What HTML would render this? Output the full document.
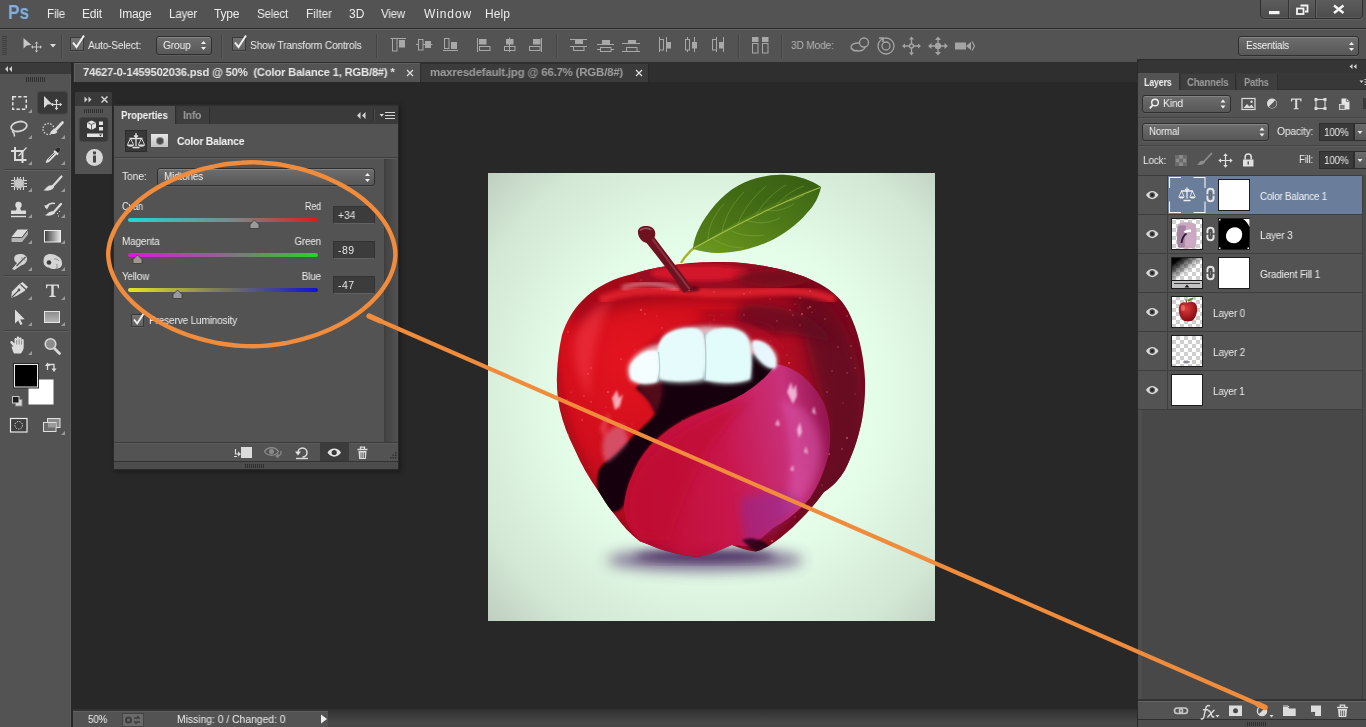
<!DOCTYPE html>
<html>
<head>
<meta charset="utf-8">
<title>Photoshop</title>
<style>
*{box-sizing:border-box;margin:0;padding:0}
html,body{width:1366px;height:727px;overflow:hidden;background:#282828}
body{font-family:"Liberation Sans",sans-serif;font-size:11px;color:#e6e6e6;position:relative}
.abs{position:absolute}
.t{position:absolute;white-space:nowrap;line-height:1;will-change:transform}
#menubar{left:0;top:0;width:1366px;height:29px;background:#535353;border-bottom:1px solid #2c2c2c}
#menubar .t{top:8px;font-size:12px;color:#ececec}
#optbar{left:0;top:28px;width:1366px;height:35px;background:#535353;border-top:1px solid #2c2c2c;border-bottom:1px solid #2d2d2d;box-shadow:inset 0 1px 0 #626262}
#tabstrip{left:73px;top:63px;width:1064px;height:19px;background:#2f2f2f}
#toolbar{left:0;top:63px;width:71px;height:664px;background:#535353;box-shadow:inset -1px 0 0 #5c5c5c}
#statusbar{left:73px;top:709px;width:1064px;height:18px;background:linear-gradient(#303030,#464646 70%,#484848)}

.cb{position:absolute;width:14px;height:14px;border:1px solid #3a3a3a;background:linear-gradient(#727272,#626262);box-shadow:0 1px 0 #5e5e5e}
.dd{position:absolute;border:1px solid #2f2f2f;border-radius:3px;background:linear-gradient(#6e6e6e,#575757);box-shadow:inset 0 1px 0 #858585,0 1px 0 #5e5e5e}
.sep{position:absolute;width:2px;background:#444;border-right:1px solid #5c5c5c}
</style>
</head>
<body>
<!-- MENUBAR -->
<div id="menubar" class="abs">
  <div class="t" style="left:7.500px;top:2px;font-size:20.500px;font-weight:bold;color:#86aed8;transform:scaleX(0.84);transform-origin:left center;text-shadow:0 0 1px #3a6a9a">Ps</div>
  <div class="t" style="left:47px;letter-spacing:-0.200px;transform:scaleX(0.9707);transform-origin:left center">File</div>
  <div class="t" style="left:82px;letter-spacing:-0.200px;transform:scaleX(1.0057);transform-origin:left center">Edit</div>
  <div class="t" style="left:119px;letter-spacing:-0.200px;transform:scaleX(0.9889);transform-origin:left center">Image</div>
  <div class="t" style="left:169px;letter-spacing:-0.200px;transform:scaleX(0.9645);transform-origin:left center">Layer</div>
  <div class="t" style="left:214px;letter-spacing:-0.200px;transform:scaleX(0.9914);transform-origin:left center">Type</div>
  <div class="t" style="left:257px;letter-spacing:-0.200px;transform:scaleX(0.9639);transform-origin:left center">Select</div>
  <div class="t" style="left:306px;letter-spacing:0.000px;transform:scaleX(0.9748);transform-origin:left center">Filter</div>
  <div class="t" style="left:349px;letter-spacing:0.000px;transform:scaleX(0.9776);transform-origin:left center">3D</div>
  <div class="t" style="left:381px;letter-spacing:-0.200px;transform:scaleX(0.9601);transform-origin:left center">View</div>
  <div class="t" style="left:424px;letter-spacing:0.885px;transform:scaleX(1.0000);transform-origin:left center">Window</div>
  <div class="t" style="left:485px;letter-spacing:0.078px;transform:scaleX(1.0000);transform-origin:left center">Help</div>
  <!-- window controls -->
  <div class="abs" style="left:1260px;top:-1px;width:103px;height:20px;border:1px solid #2e2e2e;border-radius:0 0 4px 4px;background:linear-gradient(#5c5c5c,#4c4c4c);box-shadow:0 1px 0 #626262, inset 0 -1px 0 #5a5a5a"></div>
  <div class="abs" style="left:1288px;top:0;width:1px;height:18px;background:#333;box-shadow:1px 0 0 #626262"></div>
  <div class="abs" style="left:1315px;top:0;width:1px;height:18px;background:#333;box-shadow:1px 0 0 #626262"></div>
  <svg class="abs" style="left:1260px;top:0" width="104" height="19" viewBox="1260 0 104 19">
    <rect x="1269" y="11" width="10.500" height="3.200" fill="#f4f4f4"/>
    <path d="M1300.500 5.500h7v6h-2.500" fill="none" stroke="#f4f4f4" stroke-width="1.800"/><rect x="1297" y="8.500" width="6.500" height="5.500" fill="none" stroke="#f4f4f4" stroke-width="1.800"/>
    <path d="M1334 5.500l9.500 7.500M1343.500 5.500l-9.500 7.500" stroke="#f4f4f4" stroke-width="2.400"/>
  </svg>
</div>
<!-- OPTIONS BAR -->
<div id="optbar" class="abs">
  <!-- grip -->
  <div class="abs" style="left:2px;top:7px;width:5px;height:20px;background:repeating-linear-gradient(#3e3e3e 0 1px,transparent 1px 2px)"></div>
  <!-- move tool icon -->
  <svg class="abs" style="left:20px;top:6px" width="40" height="22" viewBox="0 0 40 22">
    <path d="M3.500 3L3.500 13.500L6.800 10.500L11.500 10Z" fill="#c8c8c8"/>
    <path d="M16.500 8.500v7M13 12h7" stroke="#c8c8c8" stroke-width="1" fill="none"/>
    <path d="M16.500 6.500l-1.800 2h3.600zM16.500 17.500l-1.800-2h3.600zM11 12l2-1.800v3.600zM22 12l-2-1.800v3.600z" fill="#c8c8c8"/>
    <path d="M30 9h6l-3 3.500z" fill="#dcdcdc"/>
  </svg>
  <div class="sep" style="left:61px;top:5px;height:24px"></div>
  <div class="cb" style="left:70px;top:8px"></div>
  <svg class="abs" style="left:70px;top:4px" width="18" height="18" viewBox="0 0 18 18"><path d="M3 9.500l3.500 4.500L14 2.500" stroke="#f0f0f0" stroke-width="2" fill="none"/></svg>
  <div class="t" style="left:88px;top:11px;font-size:11px;color:#ececec;letter-spacing:-0.200px;transform:scaleX(0.9214);transform-origin:left center">Auto-Select:</div>
  <div class="dd" style="left:156px;top:7px;width:56px;height:19px"></div>
  <div class="t" style="left:163px;top:11px;font-size:11px;color:#f0f0f0;letter-spacing:-0.200px;transform:scaleX(0.9331);transform-origin:left center">Group</div>
  <svg class="abs" style="left:199px;top:10px" width="9" height="13" viewBox="0 0 9 13"><path d="M2 5l2.500-3 2.500 3zM2 8l2.500 3 2.500-3z" fill="#f0f0f0"/></svg>
  <div class="sep" style="left:221px;top:5px;height:24px"></div>
  <div class="cb" style="left:232px;top:8px"></div>
  <svg class="abs" style="left:232px;top:4px" width="18" height="18" viewBox="0 0 18 18"><path d="M3 9.500l3.500 4.500L14 2.500" stroke="#f0f0f0" stroke-width="2" fill="none"/></svg>
  <div class="t" style="left:250px;top:11px;font-size:11px;color:#ececec;letter-spacing:-0.200px;transform:scaleX(0.9330);transform-origin:left center">Show Transform Controls</div>
  <div class="sep" style="left:376px;top:5px;height:24px"></div>
  <!-- align icons -->
  <svg class="abs" style="left:380px;top:1px" width="400" height="30" viewBox="380 30 400 30" fill="none" stroke="#a8a8a8" stroke-width="1">
    <!-- 1 align top -->
    <path d="M390.500 38.500h15.500"/><rect x="392.500" y="38.500" width="4.500" height="12.500"/><rect x="399.500" y="40.500" width="5" height="6.500" fill="#a8a8a8"/>
    <!-- 2 align vcenter -->
    <path d="M416 44.500h16.500"/><rect x="418.500" y="39.500" width="4.500" height="10.500" fill="#535353"/><rect x="425.500" y="41.500" width="5" height="6" fill="#a8a8a8"/>
    <!-- 3 align bottom -->
    <path d="M443 50.500h15"/><rect x="444.500" y="38.500" width="4.500" height="10"/><rect x="451.500" y="42.500" width="5" height="6" fill="#a8a8a8"/>
    <!-- 4 align left -->
    <path d="M477.500 38v14"/><rect x="479.500" y="39.500" width="6.500" height="4.500" fill="#a8a8a8"/><rect x="479.500" y="46.500" width="10.500" height="4"/>
    <!-- 5 align hcenter -->
    <path d="M509.500 37.500v14.500"/><rect x="506.500" y="39.500" width="6.500" height="4.500" fill="#a8a8a8"/><rect x="504.500" y="46.500" width="10.500" height="4" fill="#535353"/><path d="M509.500 46v5"/>
    <!-- 6 align right -->
    <path d="M541.500 38v14"/><rect x="533.500" y="39.500" width="6.500" height="4.500" fill="#a8a8a8"/><rect x="529.500" y="46.500" width="10.500" height="4"/>
    <!-- 7-9 distribute vertical -->
    <g id="dv"><path d="M570 39.500h17M570 46.500h17"/><rect x="575.500" y="40.500" width="7" height="3" fill="#a8a8a8"/><rect x="573.500" y="46.500" width="10.500" height="4"/></g>
    <g><path d="M597 44.500h17"/><rect x="602.500" y="40.500" width="7" height="3.500" fill="#a8a8a8"/><path d="M597 49.500h17"/><rect x="600.500" y="47.500" width="10.500" height="4" fill="#535353"/></g>
    <g><path d="M622 43.500h18M622 51.500h18"/><rect x="628.500" y="40.500" width="7" height="3" fill="#a8a8a8"/><rect x="626.500" y="47.500" width="10.500" height="4"/></g>
    <!-- 10-12 distribute horizontal -->
    <g><path d="M659.500 37v15M666.500 37v15"/><rect x="659.500" y="39.500" width="4" height="10.500"/><rect x="666.500" y="42.500" width="4" height="5.500" fill="#a8a8a8"/></g>
    <g><path d="M687.500 37v15M694.500 37v15"/><rect x="685.500" y="39.500" width="4" height="10.500" fill="#535353"/><rect x="692.500" y="42.500" width="4" height="5.500" fill="#a8a8a8"/></g>
    <g><path d="M716.500 37v15M723.500 37v15"/><rect x="712.500" y="39.500" width="4" height="10.500"/><rect x="719.500" y="42.500" width="4" height="5.500" fill="#a8a8a8"/></g>
    <!-- 13 auto-align -->
    <g><rect x="752.500" y="37.500" width="5.500" height="4" fill="#a8a8a8"/><rect x="762.500" y="37.500" width="5.500" height="4" fill="#a8a8a8"/>
    <rect x="752.500" y="43.500" width="5.500" height="9.500"/><rect x="762.500" y="43.500" width="5.500" height="9.500"/></g>
  </svg>
  <div class="sep" style="left:556px;top:5px;height:24px"></div>
  <div class="sep" style="left:738px;top:5px;height:24px"></div>
  <div class="sep" style="left:781px;top:5px;height:24px"></div>
  <div class="t" style="left:791px;top:11px;font-size:11px;color:#b4b4b4;letter-spacing:-0.200px;transform:scaleX(0.9262);transform-origin:left center">3D Mode:</div>
  <!-- 3D icons -->
  <svg class="abs" style="left:846px;top:3px" width="134" height="26" viewBox="846 32 134 26" fill="none" stroke="#a4a4a4" stroke-width="1.300">
    <!-- orbit -->
    <ellipse cx="858" cy="47" rx="7" ry="4"/><circle cx="864" cy="42.500" r="4.500" fill="#535353"/><path d="M854 51l-3-3M854 51l3.500-1"/>
    <!-- roll -->
    <circle cx="886" cy="46" r="8"/><circle cx="886" cy="46" r="4"/><path d="M879 38l4 0 0 4" stroke-width="1.600"/>
    <!-- pan -->
    <path d="M911.500 38v16M903.500 46h16"/><path d="M911.500 36.500l-2.500 3h5zM911.500 55.500l-2.500-3h5zM902 46l3-2.500v5zM921 46l-3-2.500v5z" fill="#a4a4a4" stroke="none"/><circle cx="911.500" cy="46" r="2" fill="#535353"/>
    <!-- slide -->
    <path d="M938 38.500v15M929 46h18"/><path d="M938 36.500l-3 3.500h6zM938 55.500l-3-3.500h6zM928 46l3.500-3v6zM948 46l-3.500-3v6z" fill="#a4a4a4" stroke="none"/><circle cx="938" cy="46" r="3.200" fill="#a4a4a4" stroke="none"/>
    <!-- camera -->
    <rect x="955" y="42.500" width="11" height="7" fill="#a4a4a4" stroke="none"/><path d="M966 46l5-4v8z" fill="#a4a4a4" stroke="none"/><path d="M972 41.500l2.500 4.500-2.500 4.500" stroke-width="1.200"/>
  </svg>
  <!-- Essentials -->
  <div class="dd" style="left:1238px;top:7px;width:121px;height:20px"></div>
  <div class="t" style="left:1246px;top:11px;font-size:11.500px;color:#f4f4f4;letter-spacing:-0.200px;transform:scaleX(0.8528);transform-origin:left center">Essentials</div>
  <svg class="abs" style="left:1347px;top:11px" width="9" height="13" viewBox="0 0 9 13"><path d="M2 5l2.500-3 2.500 3zM2 8l2.500 3 2.500-3z" fill="#f0f0f0"/></svg>
</div>
<!-- TAB STRIP -->
<div id="tabstrip" class="abs">
  <div class="abs" style="left:1px;top:0;width:346px;height:19px;background:#535353;border-left:1px solid #606060;border-top:1px solid #606060"></div>
  <div class="t" style="left:10px;top:4px;font-size:11.500px;font-weight:bold;color:#e8e8e8;letter-spacing:-0.200px;transform:scaleX(0.9752);transform-origin:left center">74627-0-1459502036.psd @ 50%&nbsp; (Color Balance 1, RGB/8#) *</div>
  <svg class="abs" style="left:333px;top:6px" width="8" height="8" viewBox="0 0 8 8"><path d="M1 1l6 6M7 1l-6 6" stroke="#dcdcdc" stroke-width="1.250"/></svg>
  <div class="abs" style="left:348px;top:1px;width:228px;height:18px;background:#3b3b3b;border-right:1px solid #2a2a2a"></div>
  <div class="t" style="left:357px;top:4px;font-size:11.500px;font-weight:bold;color:#9c9c9c;letter-spacing:-0.200px;transform:scaleX(0.9937);transform-origin:left center">maxresdefault.jpg @ 66.7% (RGB/8#)</div>
  <svg class="abs" style="left:562px;top:6px" width="8" height="8" viewBox="0 0 8 8"><path d="M1 1l6 6M7 1l-6 6" stroke="#dcdcdc" stroke-width="1.250"/></svg>
</div>
<!-- TOOLBAR -->
<div id="toolbar" class="abs">
  <div class="abs" style="left:0;top:0;width:71px;height:11px;background:#3a3a3a"></div>
  <svg class="abs" style="left:0;top:-1px" width="72" height="665" viewBox="0 62 72 665">
    <defs>
      <linearGradient id="gGrad" x1="0" x2="1"><stop offset="0" stop-color="#3a3a3a"/><stop offset="1" stop-color="#e8e8e8"/></linearGradient>
      <linearGradient id="gRect" y1="0" y2="1" x1="0" x2="0"><stop offset="0" stop-color="#8c8c8c"/><stop offset="1" stop-color="#b8b8b8"/></linearGradient>
    </defs>
    <!-- collapse arrows -->
    <path d="M8 66l-3 3 3 3zM12 66l-3 3 3 3z" fill="#cfcfcf"/>
    <!-- grip -->
    <g stroke="#2f2f2f" stroke-width="1"><path d="M26.500 77v5M28.500 77v5M30.500 77v5M32.500 77v5M34.500 77v5M36.500 77v5M38.500 77v5M40.500 77v5M42.500 77v5M44.500 77v5"/></g>
    <!-- separators -->
    <g stroke="#424242" stroke-width="1"><path d="M4 169.500h64M4 275.500h64M4 330.500h64"/></g>
    <g stroke="#606060" stroke-width="1"><path d="M4 170.500h64M4 276.500h64M4 331.500h64"/></g>
    <!-- flyout triangles -->
    <g fill="#9a9a9a">
      <path d="M32 109v4h-4z"/><path d="M32 135v4h-4zM65 135v4h-4z"/><path d="M32 161v4h-4zM65 161v4h-4z"/>
      <path d="M32 188v4h-4zM65 188v4h-4z"/><path d="M32 214v4h-4zM65 214v4h-4z"/><path d="M32 240v4h-4zM65 240v4h-4z"/><path d="M32 267v4h-4zM65 267v4h-4z"/>
      <path d="M32 296v4h-4zM65 296v4h-4z"/><path d="M32 322v4h-4zM65 322v4h-4z"/><path d="M32 351v4h-4z"/><path d="M65 431v4h-4z"/>
    </g>
    <!-- 1 marquee -->
    <rect x="12.750" y="96.750" width="13.500" height="12.500" fill="none" stroke="#e4e4e4" stroke-width="1.500" stroke-dasharray="3.400 2"/>
    <!-- 2 move (selected) -->
    <rect x="37.500" y="91.500" width="30" height="22.500" rx="3" fill="#383838" stroke="#484848"/>
    <path d="M44 96v12l3.500-3.500 4.800-0.300z" fill="#dadada"/>
    <path d="M56.500 100.500v8M52.500 104.500h8" stroke="#dadada" stroke-width="1.200"/>
    <path d="M56.500 98.800l-2 2.400h4zM56.500 110.200l-2-2.400h4zM50.800 104.500l2.400-2v4zM62.200 104.500l-2.400-2v4z" fill="#dadada"/>
    <!-- 3 lasso -->
    <g fill="none" stroke="#d4d4d4" stroke-width="1.800"><ellipse cx="19" cy="126.500" rx="8" ry="4.800" transform="rotate(-12 19 126.500)"/><path d="M13.500 129.500c-1.500 1.500-1 3 0.500 3.500l0.500 3.500" stroke-width="1.600"/></g>
    <!-- 4 quick select -->
    <circle cx="48.500" cy="129" r="5.500" fill="none" stroke="#d4d4d4" stroke-width="1.300" stroke-dasharray="1.500 1.500"/>
    <path d="M62.500 122.500l-7.500 8" stroke="#dcdcdc" stroke-width="2.600" stroke-linecap="round"/><path d="M55.500 130c-1.500-1.500-4.500 0-5.500 3.500 3 1.500 6.500 0 7.500-1.500z" fill="#dcdcdc"/>
    <!-- 5 crop -->
    <g fill="none" stroke="#dcdcdc" stroke-width="2"><path d="M15 147v13h11.500M11 151h11.500v12"/><path d="M26.500 147.500l-8 8.500" stroke-width="1.200"/></g>
    <!-- 6 eyedropper -->
    <path d="M57.500 147.500c1.500-1 4 1.500 3 3l-2.500 2.500 0.800 0.800-1.500 1.500-0.800-0.800-7.500 7.500-2.500 1 -0.800-0.800 1-2.500 7.500-7.500-0.800-0.800 1.500-1.500 0.800 0.800z" fill="#dcdcdc"/>
    <path d="M57.500 147.500c1.500-1 4 1.500 3 3l-2.500 2.500-3-3z" fill="#2a2a2a"/><path d="M54.500 153.500l-6 6" stroke="#535353" stroke-width="1"/>
    <!-- 7 spot healing -->
    <g stroke="#d8d8d8" stroke-width="1.100" fill="none"><path d="M14.500 177v13M17.500 177v13M20.500 177v13M23.500 177v13M11 180.500h16M11 183.500h16M11 186.500h16"/></g>
    <circle cx="19" cy="183.500" r="5" fill="#c4c4c4"/><circle cx="19" cy="183.500" r="5" fill="none" stroke="#8a8a8a" stroke-dasharray="1 1"/>
    <!-- 8 brush -->
    <path d="M61.500 176.500l-9 10" stroke="#dcdcdc" stroke-width="2.200" stroke-linecap="round"/><path d="M52.500 185.500c-2-1-5 0.500-6.500 2.500-1 1.500-2 2-3 2 3.500 1.500 8.500 0.800 11-2.500z" fill="#dcdcdc"/>
    <!-- 9 stamp -->
    <circle cx="18.500" cy="205" r="3.200" fill="#dcdcdc"/><path d="M17 207h3l1 4h-5z" fill="#dcdcdc"/><rect x="11" y="210.500" width="15" height="3.500" fill="#dcdcdc"/><path d="M11 216.500h15" stroke="#dcdcdc" stroke-width="1.400"/>
    <!-- 10 history brush -->
    <path d="M61 204l-7.500 8.500" stroke="#dcdcdc" stroke-width="2.200" stroke-linecap="round"/><path d="M53.500 211.500c-2-1-4.500 0.500-6 2-1 1-2 1.500-3 1.500 3.500 1.500 8 0.800 10.500-2z" fill="#dcdcdc"/>
    <path d="M46 208c1-3.500 5-5.500 9-4.500" stroke="#dcdcdc" stroke-width="1.600" fill="none"/><path d="M44 205.500l5.500-0.500-2.500 4.500z" fill="#dcdcdc"/><path d="M57 213l1 1M59 211l1 1M58 216l1 0" stroke="#dcdcdc"/>
    <!-- 11 eraser -->
    <path d="M17.500 229.500h10.500l-6 7.500h-10.500z" fill="#dcdcdc"/><path d="M11.500 238h10.500l6-7.500v4l-6 7.500h-10.500z" fill="#b4b4b4"/><path d="M11.500 237.500h10.500l6-7.500" stroke="#535353" stroke-width="0.800" fill="none"/>
    <!-- 12 gradient -->
    <rect x="44.500" y="230.500" width="16" height="11.500" fill="url(#gGrad)" stroke="#ececec" stroke-width="1"/>
    <!-- 13 smudge -->
    <path d="M16 255c4-2 10-1 11 3 0.500 4-2.500 7-6 7.500l-6.500 4.500-2.500-1 5-6c-3-1.500-4-5.500-1-8z" fill="#d4d4d4"/><path d="M25.500 257l-9 9" stroke="#535353" stroke-width="1.200"/><path d="M21 258c2 0 3 1 3.500 2.500" stroke="#8c8c8c" fill="none"/>
    <!-- 14 sponge -->
    <path d="M45 256c3-3 9-2.500 12 0 3 1 5.500 4 5 8.500-0.500 3-3 4.500-6 4-2 1-5.500 0.500-7-1-3 0-5.500-2.500-5.500-6 0-2.500 0.500-4.500 1.500-5.500z" fill="#d4d4d4"/><circle cx="49" cy="262.500" r="2.300" fill="#3c3c3c"/><path d="M54 259c2-0.500 4 0.500 5 2" stroke="#8c8c8c" fill="none"/><path d="M57 264v4" stroke="#8c8c8c"/>
    <!-- 15 pen -->
    <path d="M22.500 282l5.500 5-3.500 4-8 5-5.500 2 1-6.500 6.500-6.500z" fill="#dcdcdc"/><path d="M11.500 297.500l7-7" stroke="#535353" stroke-width="1.100"/><circle cx="19" cy="290" r="1.400" fill="#535353"/><path d="M20.500 284.500l5.500 5" stroke="#535353" stroke-width="1.200"/>
    <!-- 16 type -->
    <path d="M46 284.500h13v3.800h-0.900l-0.800-2.500h-3.600v9.700l1.900 0.600v0.900h-6.200v-0.900l1.900-0.600v-9.700h-3.600l-0.800 2.500h-0.900z" fill="#dcdcdc"/>
    <!-- 17 path select -->
    <path d="M15 309.500v14l3.200-3 2.300 4.500 2-1-2.300-4.500 4.500-0.300z" fill="#dcdcdc"/>
    <!-- 18 rectangle -->
    <rect x="44.500" y="311.500" width="15" height="11" fill="url(#gRect)" stroke="#e4e4e4" stroke-width="1"/>
    <!-- 19 hand -->
    <path d="M13.500 346.500l-3-3.500c-0.800-1.500 1-2.500 2-1.500l2 2v-4.500c0-1.500 2-1.500 2.200 0v-1.500c0.200-1.500 2.200-1.500 2.400 0v1c0.200-1.400 2.200-1.400 2.400 0v1.500c0.200-1.300 2-1.300 2.200 0v7c0 3-1.500 5-3 6.500h-6.500c-1.500-2-2-4.500-2.700-7z" fill="#dcdcdc"/>
    <path d="M16.700 340v4.500M19.100 339v5.500M21.500 340.500v4" stroke="#6a6a6a" stroke-width="0.700"/>
    <!-- 20 zoom -->
    <circle cx="50.500" cy="344" r="5.300" fill="#8c8c8c" stroke="#d8d8d8" stroke-width="1.600"/><path d="M54.500 348.500l5 5" stroke="#d8d8d8" stroke-width="2.800" stroke-linecap="round"/>
    <!-- swatches -->
    <rect x="28.500" y="379.500" width="25" height="25" fill="#ffffff"/>
    <rect x="13.500" y="363.500" width="25" height="24.500" fill="#000" stroke="#2a2a2a" stroke-width="1"/><rect x="14.500" y="364.500" width="23" height="22.500" fill="#000" stroke="#ececec" stroke-width="1"/>
    <path d="M47.500 370v-5.500h6.500v5" fill="none" stroke="#dcdcdc" stroke-width="1.300" transform="rotate(0)"/><path d="M45 366l2.500-3.500 2.500 3.500zM51.500 368.500l2.500 3.500 2.500-3.500z" fill="#dcdcdc"/>
    <rect x="15.500" y="399.500" width="6.500" height="6.500" fill="#d8d8d8" stroke="#8a8a8a"/><rect x="12.500" y="396.500" width="6.500" height="6.500" fill="#1e1e1e" stroke="#c8c8c8"/>
    <!-- quick mask -->
    <rect x="10.500" y="418.500" width="16.500" height="13.500" fill="#3e3e3e" stroke="#ececec" stroke-width="1.200"/><circle cx="18.700" cy="425.300" r="3.800" fill="none" stroke="#ececec" stroke-width="1" stroke-dasharray="1.300 1.300"/>
    <!-- screen mode -->
    <rect x="47.500" y="418.500" width="12.500" height="9" fill="#8a8a8a" stroke="#e0e0e0"/><rect x="43.500" y="422.500" width="12.500" height="9" fill="#6c6c6c" stroke="#e0e0e0"/><rect x="48" y="423" width="8" height="4.500" fill="#9a9a9a"/>
  </svg>
</div>
<!-- CANVAS -->
<div id="canvas" class="abs" style="left:488px;top:173px;width:447px;height:448px;background:radial-gradient(ellipse 74% 74% at 52% 50%,#eefff1 0%,#e4fde9 48%,#d3e8d5 80%,#bccabd 100%)">
<svg class="abs" style="left:0;top:0" width="447" height="448" viewBox="488 173 447 448">
  <defs>
    <filter id="b2" x="-20%" y="-20%" width="140%" height="140%"><feGaussianBlur stdDeviation="2"/></filter>
    <filter id="b1" x="-20%" y="-20%" width="140%" height="140%"><feGaussianBlur stdDeviation="1"/></filter>
    <filter id="b4" x="-30%" y="-30%" width="160%" height="160%"><feGaussianBlur stdDeviation="4"/></filter>
    <filter id="b8" x="-50%" y="-80%" width="200%" height="260%"><feGaussianBlur stdDeviation="7"/></filter>
    <radialGradient id="appleG" gradientUnits="userSpaceOnUse" cx="630" cy="360" r="270"><stop offset="0" stop-color="#e4141f"/><stop offset="0.350" stop-color="#d00e1c"/><stop offset="0.650" stop-color="#a60c22"/><stop offset="1" stop-color="#6e0a24"/></radialGradient>
    <linearGradient id="leafG" x1="0" y1="1" x2="1" y2="0"><stop offset="0" stop-color="#6f9a1e"/><stop offset="0.500" stop-color="#4f7a18"/><stop offset="1" stop-color="#3c6414"/></linearGradient>
    <linearGradient id="tongG" gradientUnits="userSpaceOnUse" x1="640" y1="470" x2="830" y2="440"><stop offset="0" stop-color="#c00e34"/><stop offset="0.450" stop-color="#c8164c"/><stop offset="0.800" stop-color="#c8327c"/><stop offset="1" stop-color="#961650"/></linearGradient>
    <clipPath id="appleClip"><path d="M582 301C596 286 615 278 633 274C648 269 660 267 671 265.500C690 262.500 705 262 718 262C738 261.500 755 264 769 267C790 271 807 277 820 284C834 292 842 300 848 311C858 330 864 355 865 380C865.500 395 864 408 862 420C858 440 852 456 845 470C839 480 832 487 824 492C816 503 808 512 800 520C795 525 791 529 786 533C778 540 768 548 756 551.500C748 551 740 548 732 545C722 549 710 555 698 557C684 556 668 552 657 548C650 545 645 543 640 541.500C630 534 622 525 615 515C609 508 604 500 599 492C589 478 581 464 575 450C568 436 563 423 560 410C557.500 398 556.500 386 557 375C557.500 361 559 348 562 335C566 322 573 310 582 301Z"/></clipPath>
  </defs>
  <!-- shadow -->
  <ellipse cx="705" cy="560" rx="98" ry="11" fill="#5a3a72" opacity="0.750" filter="url(#b8)"/>
  <ellipse cx="705" cy="556" rx="70" ry="6" fill="#3a1f52" opacity="0.700" filter="url(#b4)"/>
  <!-- apple body -->
  <path d="M582 301C596 286 615 278 633 274C648 269 660 267 671 265.500C690 262.500 705 262 718 262C738 261.500 755 264 769 267C790 271 807 277 820 284C834 292 842 300 848 311C858 330 864 355 865 380C865.500 395 864 408 862 420C858 440 852 456 845 470C839 480 832 487 824 492C816 503 808 512 800 520C795 525 791 529 786 533C778 540 768 548 756 551.500C748 551 740 548 732 545C722 549 710 555 698 557C684 556 668 552 657 548C650 545 645 543 640 541.500C630 534 622 525 615 515C609 508 604 500 599 492C589 478 581 464 575 450C568 436 563 423 560 410C557.500 398 556.500 386 557 375C557.500 361 559 348 562 335C566 322 573 310 582 301Z" fill="url(#appleG)"/>
  <g clip-path="url(#appleClip)">
    <!-- right dark side -->
    <path d="M790 280C860 300 880 400 850 480L790 540L825 420Z" fill="#5e0822" opacity="0.800" filter="url(#b8)"/>
    <path d="M570 330C600 300 700 300 760 300C810 300 850 320 870 360L870 260L570 260Z" fill="#6e0612" opacity="0.450" filter="url(#b8)"/>
    <!-- top dimple -->
    <ellipse cx="722" cy="277" rx="88" ry="14" fill="#980e20" filter="url(#b2)"/>
    <ellipse cx="700" cy="273" rx="50" ry="8" fill="#d4182a" filter="url(#b2)"/>
    <ellipse cx="775" cy="278" rx="40" ry="9" fill="#6e0a1e" opacity="0.800" filter="url(#b4)"/>
    <path d="M600 300C640 284 680 292 715 293C760 294 795 284 835 300" fill="none" stroke="#e2202f" stroke-width="9" opacity="0.900" filter="url(#b2)"/>
    <path d="M622 288C640 282 660 283 678 289" fill="none" stroke="#f8b0b8" stroke-width="3.500" opacity="0.800" filter="url(#b2)"/>
    <ellipse cx="690" cy="289" rx="10" ry="3" fill="#4a0612" opacity="0.700" filter="url(#b1)"/>
    <!-- dark patch upper right of mouth -->
    <path d="M740 305C780 300 820 315 835 345C815 335 770 330 735 335Z" fill="#5e0a22" opacity="0.750" filter="url(#b4)"/>
    <path d="M556 330C556 400 575 470 640 545L600 545L545 420Z" fill="#8a0814" opacity="0.550" filter="url(#b4)"/>
    <!-- left highlight -->
    <path d="M575 340C580 320 595 305 612 300C598 325 590 360 590 400C580 380 572 360 575 340Z" fill="#f23a4a" opacity="0.550" filter="url(#b4)"/>
    <!-- speckles -->
    <g fill="#ff8a8a" opacity="0.550"><circle cx="657" cy="316" r="0.6"/><circle cx="582" cy="420" r="0.8"/><circle cx="735" cy="521" r="0.7"/><circle cx="571" cy="392" r="0.6"/><circle cx="632" cy="424" r="0.6"/><circle cx="808" cy="308" r="0.7"/><circle cx="749" cy="432" r="0.6"/><circle cx="733" cy="382" r="0.7"/><circle cx="574" cy="507" r="0.8"/><circle cx="686" cy="421" r="0.8"/><circle cx="728" cy="459" r="0.6"/><circle cx="734" cy="448" r="0.8"/><circle cx="589" cy="467" r="0.6"/><circle cx="746" cy="409" r="1.0"/><circle cx="793" cy="401" r="1.0"/><circle cx="668" cy="342" r="0.7"/><circle cx="770" cy="341" r="0.8"/><circle cx="718" cy="511" r="1.0"/><circle cx="646" cy="540" r="0.6"/><circle cx="714" cy="320" r="0.8"/><circle cx="606" cy="407" r="0.6"/><circle cx="849" cy="296" r="0.8"/><circle cx="662" cy="370" r="1.0"/><circle cx="734" cy="398" r="0.6"/><circle cx="843" cy="403" r="0.6"/><circle cx="578" cy="464" r="1.0"/><circle cx="645" cy="379" r="0.8"/><circle cx="567" cy="400" r="0.7"/><circle cx="743" cy="408" r="0.7"/><circle cx="790" cy="310" r="0.7"/><circle cx="679" cy="523" r="1.0"/><circle cx="584" cy="396" r="0.8"/><circle cx="825" cy="496" r="0.8"/><circle cx="772" cy="541" r="1.0"/><circle cx="847" cy="316" r="0.7"/><circle cx="605" cy="453" r="0.6"/><circle cx="705" cy="434" r="0.8"/><circle cx="645" cy="314" r="0.8"/><circle cx="743" cy="361" r="0.7"/><circle cx="767" cy="414" r="0.6"/><circle cx="697" cy="510" r="1.0"/><circle cx="679" cy="381" r="1.0"/><circle cx="750" cy="292" r="0.6"/><circle cx="855" cy="394" r="0.6"/><circle cx="662" cy="289" r="0.6"/><circle cx="730" cy="420" r="0.8"/><circle cx="744" cy="294" r="0.7"/><circle cx="744" cy="315" r="0.8"/><circle cx="847" cy="438" r="1.0"/><circle cx="597" cy="504" r="1.0"/><circle cx="704" cy="359" r="0.7"/><circle cx="591" cy="368" r="0.8"/><circle cx="704" cy="462" r="0.6"/><circle cx="622" cy="532" r="0.8"/><circle cx="604" cy="422" r="0.6"/><circle cx="787" cy="355" r="0.6"/><circle cx="769" cy="346" r="0.8"/><circle cx="832" cy="371" r="0.7"/><circle cx="720" cy="485" r="0.8"/><circle cx="751" cy="441" r="0.7"/><circle cx="802" cy="496" r="0.7"/><circle cx="620" cy="408" r="0.6"/><circle cx="857" cy="488" r="1.0"/><circle cx="638" cy="462" r="0.8"/><circle cx="694" cy="528" r="0.8"/><circle cx="847" cy="373" r="0.7"/><circle cx="591" cy="402" r="0.8"/><circle cx="621" cy="443" r="0.6"/><circle cx="704" cy="451" r="0.6"/><circle cx="810" cy="307" r="1.0"/><circle cx="795" cy="478" r="1.0"/><circle cx="827" cy="392" r="0.8"/><circle cx="586" cy="530" r="1.0"/><circle cx="699" cy="476" r="0.6"/><circle cx="777" cy="321" r="0.7"/><circle cx="568" cy="435" r="1.0"/><circle cx="802" cy="314" r="1.0"/><circle cx="757" cy="370" r="0.7"/><circle cx="566" cy="491" r="0.6"/><circle cx="718" cy="527" r="1.0"/><circle cx="856" cy="328" r="0.7"/><circle cx="568" cy="332" r="0.7"/><circle cx="789" cy="363" r="1.0"/><circle cx="810" cy="291" r="0.8"/><circle cx="829" cy="454" r="1.0"/><circle cx="808" cy="512" r="0.7"/><circle cx="720" cy="416" r="0.6"/><circle cx="822" cy="485" r="0.6"/><circle cx="793" cy="315" r="0.7"/><circle cx="702" cy="471" r="0.6"/><circle cx="658" cy="415" r="1.0"/><circle cx="795" cy="304" r="0.6"/><circle cx="635" cy="350" r="0.6"/><circle cx="712" cy="427" r="0.6"/><circle cx="693" cy="440" r="0.7"/><circle cx="768" cy="397" r="1.0"/><circle cx="712" cy="342" r="0.8"/><circle cx="837" cy="516" r="0.7"/><circle cx="812" cy="312" r="0.6"/><circle cx="678" cy="360" r="0.7"/><circle cx="689" cy="332" r="0.8"/><circle cx="795" cy="517" r="0.7"/><circle cx="842" cy="449" r="0.8"/><circle cx="603" cy="513" r="1.0"/><circle cx="626" cy="532" r="1.0"/><circle cx="825" cy="319" r="0.7"/><circle cx="608" cy="392" r="1.0"/><circle cx="662" cy="328" r="0.8"/><circle cx="588" cy="374" r="0.8"/><circle cx="726" cy="394" r="0.6"/><circle cx="675" cy="415" r="0.8"/><circle cx="714" cy="292" r="0.7"/><circle cx="852" cy="303" r="0.8"/><circle cx="642" cy="520" r="0.7"/><circle cx="641" cy="310" r="1.0"/><circle cx="815" cy="458" r="0.8"/><circle cx="682" cy="420" r="1.0"/><circle cx="770" cy="299" r="0.6"/><circle cx="800" cy="325" r="0.6"/><circle cx="641" cy="280" r="0.6"/><circle cx="800" cy="298" r="0.7"/><circle cx="580" cy="508" r="1.0"/><circle cx="563" cy="543" r="1.0"/><circle cx="838" cy="347" r="0.7"/><circle cx="573" cy="467" r="0.6"/><circle cx="851" cy="346" r="0.7"/><circle cx="621" cy="359" r="0.8"/><circle cx="719" cy="331" r="1.0"/><circle cx="710" cy="323" r="0.8"/><circle cx="801" cy="544" r="0.6"/><circle cx="565" cy="473" r="0.7"/><circle cx="714" cy="341" r="1.0"/><circle cx="592" cy="496" r="1.0"/><circle cx="757" cy="422" r="1.0"/><circle cx="851" cy="358" r="0.7"/><circle cx="855" cy="368" r="0.7"/><circle cx="681" cy="369" r="0.6"/><circle cx="811" cy="279" r="0.8"/><circle cx="689" cy="290" r="1.0"/><circle cx="821" cy="456" r="0.8"/></g>
    <!-- mouth dark interior -->
    <path d="M636 388C644 380 655 376 665 374L700 352L760 354L776 362C776 370 770 380 760 388C745 398 725 404 709 409C695 414 682 420 672 427C662 434 655 440 650 446C642 455 636 465 632 476C628 486 626 496 624 505C620 512 612 514 606 510C601 505 598 499 598 493C597 485 597 478 599 470C602 464 607 460 613 455.700C620 449 627 442 633.500 435.500C642 428 650 421 655 414C654 404 646 396 636 388Z" fill="#14020c" filter="url(#b1)"/>
    <path d="M636 388C644 382 652 380 662 380C664 392 662 404 655 414C652 404 646 396 636 388Z" fill="#5a0a1e" opacity="0.900" filter="url(#b2)"/>
    <path d="M604 436C608 430 614 426 622 424C626 430 628 436 628 442C622 450 614 458 606 463C602 456 601 446 604 436Z" fill="#d8708c" opacity="0.650" filter="url(#b2)"/>
    <!-- tongue -->
    <path d="M776 364C790 366 802 374 810 383C820 394 826 405 828 416C831 430 831 444 828 457C824 472 818 486 810 498C800 510 788 520 773 528C760 540 750 548 742 546C736 544 734 546 730 548C715 556 700 558 690 556C672 553 655 548 642 542C630 532 624 520 624 505C626 492 628 484 632 476C636 465 642 455 650 446C656 440 663 434 672.500 427C683 420 696 414 709.500 409C724 404 736 398 743 394C756 386 768 376 776 364Z" fill="url(#tongG)"/>
    <!-- tongue shading -->
    <path d="M640 470C660 440 700 420 750 400C720 430 690 470 670 540L640 540C625 520 628 490 640 470Z" fill="#c00e30" opacity="0.600" filter="url(#b4)"/>
    <path d="M780 400C800 400 820 420 822 450C820 480 800 505 780 515C795 480 795 440 780 400Z" fill="#e060b8" opacity="0.450" filter="url(#b4)"/>
    <path d="M740 500C760 490 790 490 800 500C790 520 770 535 745 545Z" fill="#8a2a9a" opacity="0.500" filter="url(#b4)"/>
    <!-- tongue gloss -->
    <g fill="#f7c8e6" opacity="0.850" filter="url(#b1)">
      <path d="M787 392l4-10 2 8 3-6 1 12-4 8z"/><path d="M775 425l3-6 2 7z"/><path d="M797 430l3-8 2 10-3 6z"/><path d="M804 452l2-6 2 8z"/><path d="M790 470l3-5 1 6z"/><path d="M812 412l2-6 2 9z"/>
    </g>
    <!-- upper lip region -->
    <path d="M640 352C660 330 700 318 730 320C755 322 775 335 790 352C770 340 750 336 728 336C700 336 668 342 640 352Z" fill="#b00e26" opacity="0.800" filter="url(#b2)"/>
    <path d="M700 316C730 312 760 318 780 332" fill="none" stroke="#7a0820" stroke-width="6" opacity="0.600" filter="url(#b4)"/>
    <!-- teeth -->
    <path d="M630 362C640 348 652 346 660 344C664 332 676 327 692 327C700 326 716 326 726 327C740 327 748 334 751 342C760 338 770 344 776 354C778 362 777 368 772 369C766 368 758 362 752 352L751 380C738 385 718 385 706 381C692 384 672 384 660 381C650 386 636 385 630 380C627 372 627 367 630 362Z" fill="#eaffff" opacity="0.700" filter="url(#b2)"/>
    <g filter="url(#b1)">
      <path d="M631 364C638 353 650 349 657 351C660 360 660 373 657 382C648 385 637 384 631 379C629 373 629 368 631 364Z" fill="#f4fdff"/>
      <path d="M659 344C663 333 676 328 692 328C700 328 703.500 332 704 339C705 352 705 367 703 378C692 382 672 382 660 379C657 366 656 354 659 344Z" fill="#e6fcfc"/>
      <path d="M705 338C707 330 716 328 726 328C738 328 746 333 749 341C752 354 752 368 750 379C738 384 718 383 705 380C704 366 704 350 705 338Z" fill="#e2fbfb"/>
      <path d="M753 341C760 339 768 344 773 352C777 359 777 365 775 368C768 369 760 362 755 354C753 350 752 345 753 341Z" fill="#e8f6ff"/>
    </g>
    <path d="M704.500 333C706 346 706 366 705 380" stroke="#9cc4d0" stroke-width="1.300" fill="none" opacity="0.800"/>
    <path d="M658.500 352C660 362 660 373 658 381" stroke="#a8c8d4" stroke-width="1.200" fill="none" opacity="0.800"/>
    <!-- lower-left lip gloss -->
    <path d="M612 398l5-8 2 8 4-4-3 12-5 4z" fill="#ffd0d8" opacity="0.800" filter="url(#b1)"/>
    <path d="M600 430c2-8 6-14 10-18-2 10-4 18-4 26z" fill="#f05a6a" opacity="0.600" filter="url(#b2)"/>
    <!-- bottom area darker -->
    <path d="M640 541C660 548 690 558 700 556C720 552 740 544 756 551C775 545 790 530 800 520L800 540L640 560Z" fill="#7a0a30" opacity="0.450" filter="url(#b4)"/>
    <path d="M742 540C752 536 764 540 770 547L756 553Z" fill="#1a0418" opacity="0.800" filter="url(#b1)"/>
  </g>
  <!-- stem -->
  <path d="M638 231C638.500 226.500 646 224.500 652 227.500C655.500 230 656 234 654.500 237.500C666 253 680 271 692.500 288L684 293C672 275 658 257 646.500 243C641 241.500 637.500 236 638 231Z" fill="#6e1220"/>
  <path d="M652.500 239C663 254 677 272 689.500 289" stroke="#b05060" stroke-width="2" fill="none" opacity="0.500"/>
  <path d="M640 230.500C643 227.500 648 227.500 651.500 230" stroke="#b87080" stroke-width="1.500" fill="none" opacity="0.700"/>
  <!-- leaf petiole -->
  <path d="M681 263C685 256 690 251 696 246" stroke="#a4b42c" stroke-width="2.400" fill="none"/>
  <!-- leaf -->
  <path d="M693 249C694 236 702 220 715 205C722 197 730 190 738.500 185.500C752 178 770 174 786 175C799 176 811 180 821 187C819 197 814 206 807 213C797 225 783 235 769 241.500C752 249 735 253 718 253C709 253 700 251 693 249Z" fill="url(#leafG)"/>
  <path d="M693 249C694 236 702 220 715 205C722 197 730 190 738.500 185.500C752 178 770 174 786 175C799 176 811 180 821 187C780 196 735 222 693 249Z" fill="#2e5410" opacity="0.350"/>
  <path d="M694 248C730 228 780 203 820 187.500" stroke="#a8c850" stroke-width="1.100" fill="none" opacity="0.900"/>
  <g stroke="#94b848" stroke-width="0.600" opacity="0.650" fill="none">
    <path d="M708 240c0-12 6-26 16-36M722 232c2-13 10-28 22-40M738 224c4-12 14-26 28-38M756 215c6-10 16-22 30-30M776 206c6-8 16-16 28-20M712 238c8 6 20 10 32 10M728 229c10 6 22 8 36 6M746 220c10 4 22 4 34-2M766 210c8 2 18 0 28-6M786 201c6 0 12-2 18-6"/>
  </g>
</svg>
</div>
<!-- PROPERTIES PANEL -->
<div id="props" class="abs" style="left:0;top:0;width:0;height:0">
  <!-- mini icon panel -->
  <div class="abs" style="left:75px;top:92px;width:37px;height:82px;background:#535353;border-radius:3px 3px 0 0"></div>
  <div class="abs" style="left:75px;top:92px;width:37px;height:14px;background:#3a3a3a;border-radius:3px 3px 0 0"></div>
  <svg class="abs" style="left:75px;top:92px" width="37" height="82" viewBox="75 92 37 82">
    <path d="M84.500 96.500l3 3-3 3zM88.500 96.500l3 3-3 3z" fill="#d4d4d4"/>
    <path d="M101.500 96.500l6 6M107.500 96.500l-6 6" stroke="#d4d4d4" stroke-width="1.500"/>
    <g stroke="#2f2f2f"><path d="M84.500 109v4M86.500 109v4M88.500 109v4M90.500 109v4M92.500 109v4M94.500 109v4M96.500 109v4M98.500 109v4M100.500 109v4M102.500 109v4"/></g>
    <rect x="79.500" y="117.500" width="28.500" height="24" rx="3" fill="#383838" stroke="#444"/>
    <!-- cube -->
    <path d="M91.500 120.500l4.500 2v5l-4.500 2.500-4.500-2.500v-5z" fill="#e4e4e4"/><path d="M87 122.500l4.500 2 4.500-2M91.500 124.500v5.500" stroke="#555" stroke-width="0.900" fill="none"/>
    <rect x="99" y="121.500" width="4" height="3.500" fill="#e4e4e4"/><rect x="99" y="127" width="4" height="3.500" fill="#e4e4e4"/>
    <rect x="87" y="133.500" width="16" height="3.500" fill="#e4e4e4"/><path d="M99 134.500h3l-1.500 2z" fill="#333"/>
    <!-- info -->
    <circle cx="94.500" cy="157.500" r="8.500" fill="#d6d6d6"/><rect x="93" y="155.500" width="3" height="7" fill="#444"/><rect x="93" y="151.500" width="3" height="2.800" fill="#444"/>
  </svg>
  <!-- main props panel -->
  <div class="abs" style="left:114px;top:105px;width:284px;height:364px;background:#535353;box-shadow:0 0 0 1px #2a2a2a,2px 2px 5px 1px rgba(0,0,0,0.35)"></div>
  <div class="abs" style="left:114px;top:105px;width:284px;height:19px;background:#3a3a3a;border-top:1px solid #303030"></div>
  <div class="abs" style="left:114px;top:106px;width:62px;height:18px;background:#535353;border-right:1px solid #2e2e2e"></div>
  <div class="abs" style="left:177px;top:107px;width:33px;height:17px;background:#3e3e3e;border-right:1px solid #2e2e2e"></div>
  <div class="t" style="left:121px;top:110px;font-size:11px;font-weight:bold;color:#f0f0f0;letter-spacing:-0.200px;transform:scaleX(0.8928);transform-origin:left center">Properties</div>
  <div class="t" style="left:183px;top:110px;font-size:11px;font-weight:bold;color:#9a9a9a;letter-spacing:-0.200px;transform:scaleX(0.9447);transform-origin:left center">Info</div>
  <svg class="abs" style="left:355px;top:108px" width="42" height="14" viewBox="355 108 42 14">
    <path d="M360.500 112l-3.500 3.500 3.500 3.500zM365.500 112l-3.500 3.500 3.500 3.500z" fill="#d4d4d4"/>
    <path d="M373.500 110v11" stroke="#2e2e2e"/><path d="M374.500 110v11" stroke="#4c4c4c"/>
    <path d="M379.500 114h4.500l-2.250 2.800z" fill="#d4d4d4"/><path d="M385 112.500h10M385 115.500h10M385 118.500h10" stroke="#d4d4d4" stroke-width="1.200"/>
  </svg>
  <!-- header row -->
  <div class="abs" style="left:125px;top:130px;width:22px;height:22px;background:#383838;border:1px solid #2c2c2c"></div>
  <svg class="abs" style="left:125px;top:130px" width="22" height="22" viewBox="0 0 22 22" fill="none" stroke="#e0e0e0">
    <path d="M11 4.500v11.500M4.500 8.500h13" stroke-width="1.300"/><path d="M7.500 17.500h7" stroke-width="1.600"/>
    <path d="M5.500 8.500l-3 6M5.500 8.500l3 6M16.500 8.500l-3 6M16.500 8.500l3 6" stroke-width="0.900"/>
    <path d="M2 14.500h7c0 3-7 3-7 0zM13 14.500h7c0 3-7 3-7 0z" fill="#e0e0e0" stroke="none"/>
    <path d="M11 3v3.500M9 5.500l2 2 2-2" stroke-width="1.200"/>
  </svg>
  <div class="abs" style="left:151px;top:134px;width:17px;height:13px;background:linear-gradient(#e6e6e6,#c4c4c4)"></div>
  <div class="abs" style="left:156.500px;top:137.500px;width:6px;height:6px;border-radius:50%;background:#4a4a4a;box-shadow:0 0 0 1px #8a8a8a"></div>
  <div class="t" style="left:177px;top:136px;font-size:11px;font-weight:bold;color:#f4f4f4;letter-spacing:-0.200px;transform:scaleX(0.9430);transform-origin:left center">Color Balance</div>
  <div class="abs" style="left:114px;top:157px;width:284px;height:2px;background:#3e3e3e;border-bottom:1px solid #5e5e5e"></div>
  <!-- scroll gutter -->
  <div class="abs" style="left:384px;top:159px;width:14px;height:283px;border-left:1px solid #3e3e3e;background:linear-gradient(90deg,#424242,#525252)"></div>
  <!-- tone -->
  <div class="t" style="left:122px;top:171px;font-size:11px;color:#ececec;letter-spacing:-0.200px;transform:scaleX(0.9451);transform-origin:left center">Tone:</div>
  <div class="dd" style="left:157px;top:168px;width:218px;height:18px"></div>
  <div class="t" style="left:164px;top:171px;font-size:11px;color:#f0f0f0;letter-spacing:-0.200px;transform:scaleX(0.9061);transform-origin:left center">Midtones</div>
  <svg class="abs" style="left:363px;top:171px" width="9" height="13" viewBox="0 0 9 13"><path d="M2 5l2.500-3 2.500 3zM2 8l2.500 3 2.500-3z" fill="#f0f0f0"/></svg>
  <!-- sliders -->
  <div class="t" style="left:122px;top:201px;font-size:10.500px;color:#ececec;letter-spacing:-0.200px;transform:scaleX(0.8855);transform-origin:left center">Cyan</div>
  <div class="t" style="left:281px;top:201px;width:40px;text-align:right;font-size:10.500px;color:#ececec;letter-spacing:-0.200px;transform:scaleX(0.8572);transform-origin:right center">Red</div>
  <div class="abs" style="left:128px;top:218px;width:190px;height:4px;border-radius:2px;background:linear-gradient(90deg,#1fd8d8,#7a8a8a 55%,#e01818)"></div>
  <div class="abs" style="left:333px;top:206px;width:42px;height:18px;background:#3c3c3c;border:1px solid #333;border-bottom-color:#626262"></div>
  <div class="t" style="left:338px;top:210px;font-size:10.500px;color:#e4e4e4;letter-spacing:0.000px;transform:scaleX(0.9712);transform-origin:left center">+34</div>

  <div class="t" style="left:122px;top:236px;font-size:10.500px;color:#ececec;letter-spacing:-0.200px;transform:scaleX(0.9525);transform-origin:left center">Magenta</div>
  <div class="t" style="left:281px;top:236px;width:40px;text-align:right;font-size:10.500px;color:#ececec;letter-spacing:-0.200px;transform:scaleX(0.9401);transform-origin:right center">Green</div>
  <div class="abs" style="left:128px;top:253px;width:190px;height:4px;border-radius:2px;background:linear-gradient(90deg,#e015e0,#8a6a8a 50%,#1fd81f)"></div>
  <div class="abs" style="left:333px;top:241px;width:42px;height:18px;background:#3c3c3c;border:1px solid #333;border-bottom-color:#626262"></div>
  <div class="t" style="left:338px;top:245px;font-size:10.500px;color:#e4e4e4;letter-spacing:0.438px;transform:scaleX(1.0000);transform-origin:left center">-89</div>

  <div class="t" style="left:122px;top:271px;font-size:10.500px;color:#ececec;letter-spacing:-0.200px;transform:scaleX(0.9385);transform-origin:left center">Yellow</div>
  <div class="t" style="left:281px;top:271px;width:40px;text-align:right;font-size:10.500px;color:#ececec;letter-spacing:-0.200px;transform:scaleX(0.9547);transform-origin:right center">Blue</div>
  <div class="abs" style="left:128px;top:288px;width:190px;height:4px;border-radius:2px;background:linear-gradient(90deg,#e6e620,#77775a 50%,#1010d8)"></div>
  <div class="abs" style="left:333px;top:276px;width:42px;height:18px;background:#3c3c3c;border:1px solid #333;border-bottom-color:#626262"></div>
  <div class="t" style="left:338px;top:280px;font-size:10.500px;color:#e4e4e4;letter-spacing:0.438px;transform:scaleX(1.0000);transform-origin:left center">-47</div>
  <!-- thumbs -->
  <svg class="abs" style="left:120px;top:215px" width="210" height="85" viewBox="120 215 210 85">
    <g fill="#9a9a9a" stroke="#3a3a3a" stroke-width="0.800">
      <path d="M254.500 220l4.500 4.500v4h-9v-4z"/><path d="M137.500 255l4.500 4.500v4h-9v-4z"/><path d="M177.500 290l4.500 4.500v4h-9v-4z"/>
    </g>
  </svg>
  <!-- checkbox -->
  <div class="cb" style="left:131px;top:314px;width:13px;height:13px"></div>
  <svg class="abs" style="left:131px;top:310px" width="18" height="18" viewBox="0 0 18 18"><path d="M3 9.500l3.200 4L13 3" stroke="#f0f0f0" stroke-width="1.900" fill="none"/></svg>
  <div class="t" style="left:149px;top:315px;font-size:10.500px;color:#ececec;letter-spacing:-0.200px;transform:scaleX(0.9636);transform-origin:left center">Preserve Luminosity</div>
  <!-- bottom bar -->
  <div class="abs" style="left:114px;top:442px;width:284px;height:20px;background:#535353;border-top:1px solid #3a3a3a;border-bottom:1px solid #333;box-shadow:inset 0 1px 0 #5c5c5c"></div>
  <div class="abs" style="left:320px;top:443px;width:29px;height:18px;background:#3c3c3c"></div>
  <div class="abs" style="left:114px;top:462px;width:284px;height:7px;background:#4c4c4c"></div>
  <svg class="abs" style="left:230px;top:443px" width="168" height="27" viewBox="230 443 168 27">
    <!-- clip -->
    <rect x="241" y="447" width="11" height="11" fill="#dcdcdc"/><path d="M235.500 449v5h4" stroke="#dcdcdc" fill="none" stroke-width="1.200"/><path d="M238 451.500l3 2.500-3 2.500z" fill="#dcdcdc"/><path d="M234 456.500h3" stroke="#dcdcdc"/>
    <!-- view previous (dim) -->
    <path d="M264.500 451.500c3-5 11-5 14 0-3 5-11 5-14 0z" fill="none" stroke="#8a8a8a" stroke-width="1.300"/><circle cx="271.500" cy="451.500" r="2.500" fill="#8a8a8a"/><path d="M277 456c3 0 4.500-2 4-5" fill="none" stroke="#8a8a8a" stroke-width="1.300"/><path d="M275 456l3.500-2.500v5z" fill="#8a8a8a"/>
    <!-- reset -->
    <path d="M298 452.500a4.500 4.500 0 1 1 4.500 4.500" fill="none" stroke="#e0e0e0" stroke-width="1.500"/><path d="M295 451.500h6l-3 4z" fill="#e0e0e0"/><path d="M296 458.500h12" stroke="#e0e0e0" stroke-width="1.300"/>
    <!-- eye -->
    <path d="M327.500 452.500c3-5.500 10.500-5.500 13.500 0-3 5.500-10.500 5.500-13.500 0z" fill="#e4e4e4"/><circle cx="334.200" cy="452.500" r="2.600" fill="#383838"/>
    <!-- trash -->
    <path d="M357.500 449.500h10M360.500 449v-1.800h4v1.800" stroke="#dcdcdc" stroke-width="1.300" fill="none"/><path d="M358.500 451h8l-0.600 8h-6.800z" fill="#dcdcdc"/><path d="M361 452.500v5.500M362.800 452.500v5.500M364.500 452.500v5.500" stroke="#4a4a4a" stroke-width="0.800"/>
    <!-- resize corner -->
    <g fill="#2e2e2e"><rect x="395" y="452" width="1.500" height="1.500"/><rect x="392.500" y="454.500" width="1.500" height="1.500"/><rect x="395" y="454.500" width="1.500" height="1.500"/><rect x="390" y="457" width="1.500" height="1.500"/><rect x="392.500" y="457" width="1.500" height="1.500"/><rect x="395" y="457" width="1.500" height="1.500"/></g>
    <!-- grip -->
    <g stroke="#2f2f2f"><path d="M245.500 464v4M247.500 464v4M249.500 464v4M251.500 464v4M253.500 464v4M255.500 464v4M257.500 464v4M259.500 464v4M261.500 464v4M263.500 464v4"/></g>
  </svg>
</div>
<!-- RIGHT PANEL -->
<div id="rpanel" class="abs" style="left:0;top:0;width:0;height:0;background:none">
  <div class="abs" style="left:1137px;top:59px;width:229px;height:668px;background:#535353;border-left:1px solid #2a2a2a"></div>
  <div class="abs" style="left:1137px;top:59px;width:229px;height:14px;background:#353535;border-top:1px solid #2a2a2a;border-left:1px solid #2a2a2a;border-radius:3px 0 0 0"></div>
  <div class="abs" style="left:1138px;top:73px;width:228px;height:17px;background:#383838;border-bottom:1px solid #303030"></div>
  <div class="abs" style="left:1138px;top:73px;width:42px;height:17px;background:#535353;border-right:1px solid #2e2e2e"></div>
  <div class="abs" style="left:1181px;top:74px;width:55px;height:16px;background:#3e3e3e;border-right:1px solid #2e2e2e"></div>
  <div class="abs" style="left:1237px;top:74px;width:41px;height:16px;background:#3e3e3e;border-right:1px solid #2e2e2e"></div>
  <div class="t" style="left:1144px;top:77px;font-size:10.500px;font-weight:bold;color:#f0f0f0;letter-spacing:-0.200px;transform:scaleX(0.8420);transform-origin:left center">Layers</div>
  <div class="t" style="left:1187px;top:77px;font-size:10.500px;font-weight:bold;color:#9c9c9c;letter-spacing:-0.200px;transform:scaleX(0.9066);transform-origin:left center">Channels</div>
  <div class="t" style="left:1244px;top:77px;font-size:10.500px;font-weight:bold;color:#9c9c9c;letter-spacing:-0.200px;transform:scaleX(0.8915);transform-origin:left center">Paths</div>
  <!-- filter row -->
  <div class="dd" style="left:1142px;top:95px;width:89px;height:18px"></div>
  <div class="t" style="left:1163px;top:98px;font-size:11px;color:#f0f0f0;letter-spacing:-0.200px;transform:scaleX(0.9420);transform-origin:left center">Kind</div>
  <div class="abs" style="left:1138px;top:117px;width:228px;height:2px;background:#444;border-bottom:1px solid #5c5c5c"></div>
  <!-- blend row -->
  <div class="dd" style="left:1142px;top:123px;width:127px;height:18px"></div>
  <div class="t" style="left:1149px;top:126px;font-size:11px;color:#f0f0f0;letter-spacing:-0.200px;transform:scaleX(0.8846);transform-origin:left center">Normal</div>
  <div class="t" style="left:1277px;top:126px;font-size:10.500px;color:#ececec;letter-spacing:-0.200px;transform:scaleX(0.9806);transform-origin:left center">Opacity:</div>
  <div class="abs" style="left:1319px;top:123px;width:35px;height:18px;background:#3a3a3a;border:1px solid #2e2e2e"></div>
  <div class="abs" style="left:1354px;top:123px;width:12px;height:18px;background:linear-gradient(#6a6a6a,#575757);border:1px solid #2e2e2e;border-right:none"></div>
  <div class="t" style="left:1324px;top:127px;font-size:10.500px;color:#ececec;letter-spacing:-0.200px;transform:scaleX(0.9363);transform-origin:left center">100%</div>
  <div class="abs" style="left:1138px;top:145px;width:228px;height:2px;background:#444;border-bottom:1px solid #5c5c5c"></div>
  <!-- lock row -->
  <div class="t" style="left:1143px;top:155px;font-size:10.500px;color:#ececec;letter-spacing:-0.200px;transform:scaleX(0.9540);transform-origin:left center">Lock:</div>
  <div class="t" style="left:1299px;top:154px;font-size:10.500px;color:#ececec;letter-spacing:-0.200px;transform:scaleX(0.9124);transform-origin:left center">Fill:</div>
  <div class="abs" style="left:1319px;top:151px;width:35px;height:18px;background:#3a3a3a;border:1px solid #2e2e2e"></div>
  <div class="abs" style="left:1354px;top:151px;width:12px;height:18px;background:linear-gradient(#6a6a6a,#575757);border:1px solid #2e2e2e;border-right:none"></div>
  <div class="t" style="left:1324px;top:155px;font-size:10.500px;color:#ececec;letter-spacing:-0.200px;transform:scaleX(0.9363);transform-origin:left center">100%</div>
  <!-- rows -->
  <div class="abs" style="left:1138px;top:175px;width:224px;height:235px;background:#535353;border-top:1px solid #3c3c3c"></div>
  <div class="abs" style="left:1168px;top:176px;width:194px;height:38px;background:#6a7e9c"></div>
  <div class="abs" style="left:1362px;top:175px;width:4px;height:524px;background:#4a4a4a;border-left:1px solid #404040"></div>
  <div class="abs" style="left:1138px;top:410px;width:224px;height:289px;background:#484848;border-left:4px solid #4e4e4e"></div>
  <div class="t" style="left:1260px;top:191px;font-size:10.500px;color:#f4f4f4;letter-spacing:-0.200px;transform:scaleX(0.9342);transform-origin:left center">Color Balance 1</div>
  <div class="t" style="left:1260px;top:230px;font-size:10.500px;color:#ececec;letter-spacing:-0.200px;transform:scaleX(0.9664);transform-origin:left center">Layer 3</div>
  <div class="t" style="left:1260px;top:269px;font-size:10.500px;color:#ececec;letter-spacing:-0.200px;transform:scaleX(0.9622);transform-origin:left center">Gradient Fill 1</div>
  <div class="t" style="left:1213px;top:308px;font-size:10.500px;color:#ececec;letter-spacing:-0.200px;transform:scaleX(0.9515);transform-origin:left center">Layer 0</div>
  <div class="t" style="left:1213px;top:347px;font-size:10.500px;color:#ececec;letter-spacing:-0.200px;transform:scaleX(0.9515);transform-origin:left center">Layer 2</div>
  <div class="t" style="left:1213px;top:386px;font-size:10.500px;color:#ececec;letter-spacing:-0.200px;transform:scaleX(0.9366);transform-origin:left center">Layer 1</div>
  <!-- bottom bar -->
  <div class="abs" style="left:1138px;top:699px;width:228px;height:21px;background:#535353;border-top:2px solid #333;border-bottom:1px solid #2e2e2e;box-shadow:inset 0 1px 0 #626262"></div>
  <div class="abs" style="left:1138px;top:720px;width:228px;height:7px;background:#4c4c4c"></div>
  <svg class="abs" style="left:1137px;top:59px" width="229" height="668" viewBox="1137 59 229 668">
    <defs>
      <pattern id="chk" width="8" height="8" patternUnits="userSpaceOnUse"><rect width="8" height="8" fill="#ffffff"/><rect width="4" height="4" fill="#cfcfcf"/><rect x="4" y="4" width="4" height="4" fill="#cfcfcf"/></pattern>
      <linearGradient id="gf" x1="0" y1="0" x2="0.900" y2="0.900"><stop offset="0.150" stop-color="#000"/><stop offset="0.650" stop-color="#000" stop-opacity="0"/></linearGradient>
      <radialGradient id="apl" cx="0.400" cy="0.350" r="0.700"><stop offset="0" stop-color="#e03a3a"/><stop offset="1" stop-color="#7a0a10"/></radialGradient>
    </defs>
    <path d="M1352.500 64l-3 2.500 3 2.500zM1356.500 64l-3 2.500 3 2.500z" fill="#d0d0d0"/>
    <path d="M1359.500 80.500h4l-2 2.500z" fill="#d4d4d4"/><path d="M1364.500 79.500h2M1364.500 82h2M1364.500 84.500h2" stroke="#d4d4d4"/>
    <!-- magnifier + arrows in Kind -->
    <circle cx="1155" cy="102.500" r="3.300" fill="none" stroke="#f0f0f0" stroke-width="1.400"/><path d="M1152.800 105l-3 3.300" stroke="#f0f0f0" stroke-width="1.800"/>
    <path d="M1220.500 102.500l2.500-3 2.500 3zM1220.500 105.500l2.500 3 2.500-3z" fill="#f0f0f0"/>
    <path d="M1259.500 130.500l2.500-3 2.500 3zM1259.500 133.500l2.500 3 2.500-3z" fill="#f0f0f0"/>
    <path d="M1357.500 131h5l-2.500 3zM1357.500 159h5l-2.500 3z" fill="#e8e8e8"/>
    <!-- filter icons -->
    <rect x="1242" y="98.500" width="13" height="11" fill="none" stroke="#dcdcdc" stroke-width="1.200"/><path d="M1243.500 108l3.500-4 2.500 2.500 2-2 2.500 3.500z" fill="#dcdcdc"/><circle cx="1251.500" cy="101.800" r="1.200" fill="#dcdcdc"/>
    <circle cx="1272" cy="103.500" r="5" fill="#dcdcdc"/><path d="M1268.800 106.700a4.500 4.500 0 0 0 6.400-6.400z" fill="#555"/>
    <path d="M1291 98.500h10.500v3h-1l-0.500-1.800h-2.800v8.300l1.500 0.500v0.800h-5v-0.800l1.500-0.500v-8.300h-2.800l-0.500 1.800h-1z" fill="#dcdcdc"/>
    <rect x="1316" y="99.500" width="9" height="9" fill="none" stroke="#dcdcdc" stroke-width="1.100"/><g fill="#dcdcdc"><rect x="1314.500" y="98" width="3" height="3"/><rect x="1323.500" y="98" width="3" height="3"/><rect x="1314.500" y="107" width="3" height="3"/><rect x="1323.500" y="107" width="3" height="3"/></g>
    <path d="M1341.500 98.500h5l3 3v8h-8z" fill="#e4e4e4"/><path d="M1346.500 98.500v3h3" stroke="#666" fill="none" stroke-width="0.800"/><rect x="1339.500" y="104.500" width="5.500" height="5" fill="#7a7a7a" stroke="#e4e4e4" stroke-width="0.800"/>
    <rect x="1363" y="98" width="3" height="11" fill="#3a3a3a"/>
    <!-- lock icons -->
    <g><rect x="1175.500" y="155" width="11" height="11" fill="#8c8c8c"/><g fill="#6a6a6a"><rect x="1175.500" y="155" width="3.700" height="3.700"/><rect x="1182.800" y="155" width="3.700" height="3.700"/><rect x="1179.200" y="158.700" width="3.700" height="3.700"/><rect x="1175.500" y="162.300" width="3.700" height="3.700"/><rect x="1182.800" y="162.300" width="3.700" height="3.700"/></g></g>
    <path d="M1211.500 153.500l-8 8.500" stroke="#8e8e8e" stroke-width="1.800" stroke-linecap="round"/><path d="M1203.500 161c-1.500-0.800-3.500 0.300-4.500 1.800-0.800 1-1.500 1.500-2.500 1.500 3 1.300 6.500 0.700 8.500-1.800z" fill="#8e8e8e"/>
    <path d="M1225.500 155v11M1220 160.500h11" stroke="#e0e0e0" stroke-width="1.200"/><path d="M1225.500 153.300l-2.300 2.800h4.600zM1225.500 167.700l-2.300-2.800h4.600zM1218.300 160.500l2.800-2.300v4.600zM1232.700 160.500l-2.800-2.300v4.600z" fill="#e0e0e0"/>
    <rect x="1243" y="159.500" width="10.500" height="7" fill="#e0e0e0"/><path d="M1245.200 159.500v-2.500a3 3 0 0 1 6 0v2.500" fill="none" stroke="#e0e0e0" stroke-width="1.600"/><rect x="1247.500" y="161.500" width="1.500" height="3" fill="#555"/>
    <!-- row separators -->
    <g stroke="#3e3e3e"><path d="M1138 214.500h224M1138 253.500h224M1138 292.500h224M1138 331.500h224M1138 370.500h224M1138 409.500h224M1167.500 176v234"/></g>
    <path d="M1146 195c3.200-5.500 9.300-5.500 12.500 0-3.200 5.500-9.300 5.500-12.500 0z" fill="#dadada"/><circle cx="1152.200" cy="195" r="2.700" fill="#4a4a4a"/><circle cx="1152.200" cy="195" r="1.200" fill="#1e1e1e"/><path d="M1146 234c3.200-5.500 9.300-5.500 12.500 0-3.200 5.500-9.300 5.500-12.500 0z" fill="#dadada"/><circle cx="1152.200" cy="234" r="2.700" fill="#4a4a4a"/><circle cx="1152.200" cy="234" r="1.200" fill="#1e1e1e"/><path d="M1146 273c3.200-5.500 9.300-5.500 12.500 0-3.200 5.500-9.300 5.500-12.500 0z" fill="#dadada"/><circle cx="1152.200" cy="273" r="2.700" fill="#4a4a4a"/><circle cx="1152.200" cy="273" r="1.200" fill="#1e1e1e"/><path d="M1146 312c3.200-5.500 9.300-5.500 12.500 0-3.200 5.500-9.300 5.500-12.500 0z" fill="#dadada"/><circle cx="1152.200" cy="312" r="2.700" fill="#4a4a4a"/><circle cx="1152.200" cy="312" r="1.200" fill="#1e1e1e"/><path d="M1146 351c3.200-5.500 9.300-5.500 12.500 0-3.200 5.500-9.300 5.500-12.500 0z" fill="#dadada"/><circle cx="1152.200" cy="351" r="2.700" fill="#4a4a4a"/><circle cx="1152.200" cy="351" r="1.200" fill="#1e1e1e"/><path d="M1146 390c3.200-5.500 9.300-5.500 12.500 0-3.200 5.500-9.300 5.500-12.500 0z" fill="#dadada"/><circle cx="1152.200" cy="390" r="2.700" fill="#4a4a4a"/><circle cx="1152.200" cy="390" r="1.200" fill="#1e1e1e"/>
    <!-- row1: color balance -->
    <path d="M1169.500 188v-10.500h11.500M1193.500 177.500h11.500v10.500M1205 201.500v11h-11.500M1181 212.500h-11.500v-11" fill="none" stroke="#f4f4f4" stroke-width="1.100"/>
    <g fill="none" stroke="#eeeeee"><path d="M1187 187.500v11M1181 191h12" stroke-width="1.300"/><path d="M1183.500 200.500h7" stroke-width="1.500"/><path d="M1181.500 191l-2.500 5.500M1181.500 191l2.500 5.500M1192.500 191l-2.500 5.500M1192.500 191l2.500 5.500" stroke-width="0.900"/><path d="M1178.500 196.500h6c0 2.800-6 2.800-6 0zM1189.500 196.500h6c0 2.800-6 2.800-6 0z" fill="#eeeeee" stroke="none"/><path d="M1185 189l2 2 2-2" stroke-width="1.100"/></g>
    <path d="M1207.400 194.2v-2.400a3.100 3.100 0 0 1 6.200 0v2.400M1207.400 195.8v2.400a3.100 3.100 0 0 0 6.200 0v-2.400" fill="none" stroke="#e4e4e4" stroke-width="1.900"/><path d="M1210.500 192.4v5.200" stroke="#3c3c3c" stroke-width="1.600"/><path d="M1210.500 192.8v4.400" stroke="#e4e4e4" stroke-width="0.700" opacity="0.600"/>
    <rect x="1218.500" y="179.500" width="31" height="31" fill="#ffffff" stroke="#1e1e1e"/>
    <!-- row2: layer 3 -->
    <rect x="1171.500" y="218.500" width="31" height="31" fill="url(#chk)" stroke="#1e1e1e"/>
    <path d="M1178 224c5-2.500 13-2.500 17.500 0 1.500 8 1.500 16 0 23.500-5 1.500-13 1.500-17.500 0-1.500-7-1.500-16 0-23.500z" fill="#c9a9c0"/><path d="M1178 226c3-1 6-1 8 0-1 8-2 14-1 21-3 0.500-5 0.500-7 0-1.500-7-1.500-14 0-21z" fill="#9c7a98" opacity="0.800"/><path d="M1184.500 232.500c2-1.500 4.500-2 6.500-1.500" stroke="#ffffff" stroke-width="2.600" fill="none"/><path d="M1181.500 243c0.500-4 2-7.500 5-9.500" stroke="#2a1830" stroke-width="1.700" fill="none"/><ellipse cx="1190" cy="241" rx="4.500" ry="5.500" fill="#cfa8c6" opacity="0.900"/>
    <path d="M1207.400 233.2v-2.400a3.100 3.100 0 0 1 6.200 0v2.400M1207.400 234.8v2.400a3.100 3.100 0 0 0 6.200 0v-2.400" fill="none" stroke="#e4e4e4" stroke-width="1.900"/><path d="M1210.500 231.4v5.200" stroke="#3c3c3c" stroke-width="1.600"/><path d="M1210.500 231.8v4.400" stroke="#e4e4e4" stroke-width="0.700" opacity="0.600"/>
    <rect x="1218.500" y="218.500" width="31" height="31" fill="#000" stroke="#1e1e1e"/><path d="M1229 229.500c4-3.500 10-3 12.500 1.500 2 5-0.500 10.500-5.500 12-5 1-9.500-1.500-10-6-0.300-3 1-5.500 3-7.500z" fill="#fff"/><path d="M1243 219h6.500v8c-1.500-3.500-3.500-6-6.500-8z" fill="#fff"/><rect x="1219" y="219" width="1.500" height="1.500" fill="#fff"/><rect x="1219" y="247.500" width="1.500" height="1.500" fill="#fff"/><rect x="1247.500" y="247.500" width="1.500" height="1.500" fill="#fff"/>
    <!-- row3: gradient fill -->
    <rect x="1171.500" y="257.500" width="31" height="31" fill="#c4c4c4" stroke="#1e1e1e"/><rect x="1172" y="258" width="30" height="22" fill="url(#chk)"/><rect x="1172" y="258" width="30" height="22" fill="url(#gf)"/><path d="M1172 280.500h30" stroke="#1e1e1e"/><path d="M1174 283.500h26" stroke="#3a3a3a" stroke-width="1"/><path d="M1187 284.500l2.500 3h-5z" fill="#1e1e1e"/>
    <path d="M1207.400 272.2v-2.400a3.100 3.100 0 0 1 6.200 0v2.400M1207.400 273.8v2.400a3.100 3.100 0 0 0 6.200 0v-2.400" fill="none" stroke="#e4e4e4" stroke-width="1.900"/><path d="M1210.500 270.4v5.200" stroke="#3c3c3c" stroke-width="1.600"/><path d="M1210.500 270.8v4.400" stroke="#e4e4e4" stroke-width="0.700" opacity="0.600"/>
    <rect x="1218.500" y="257.500" width="31" height="31" fill="#ffffff" stroke="#1e1e1e"/>
    <!-- row4: layer 0 apple -->
    <rect x="1171.500" y="296.500" width="31" height="31" fill="url(#chk)" stroke="#1e1e1e"/>
    <path d="M1187 303c3-2 8-1.500 9.500 2 1.500 4 0.500 10-2.500 14-1.500 1.800-3 2.500-4 2-1 0.500-2.500 0.500-3.500 0-1.500 0.500-3.500-0.300-5-2.500-2.500-3.500-3.500-9-2-13 1.200-3 5-4 7.500-2.500z" fill="url(#apl)"/><path d="M1187 303.500l-1.200-4" stroke="#5a2a18" stroke-width="1"/><path d="M1187 301c1-2.500 4-3.500 6.500-3-1 2.500-4 3.500-6.500 3z" fill="#5c8a1c"/><ellipse cx="1183" cy="308" rx="2" ry="3" fill="#f08a8a" opacity="0.600"/>
    <!-- row5: layer 2 -->
    <rect x="1171.500" y="335.500" width="31" height="31" fill="url(#chk)" stroke="#1e1e1e"/><ellipse cx="1186.500" cy="362" rx="3.500" ry="1" fill="#8a8a9a"/>
    <!-- row6: layer 1 -->
    <rect x="1171.500" y="374.500" width="31" height="31" fill="#ffffff" stroke="#1e1e1e"/>
    <!-- bottom icons -->
    <g fill="none" stroke="#c8c8c8" stroke-width="1.600"><rect x="1174.500" y="708" width="8" height="5.500" rx="2.750"/><rect x="1179.500" y="708" width="8" height="5.500" rx="2.750"/></g>
    <g fill="none" stroke="#dcdcdc" stroke-width="1.400" stroke-linecap="round"><path d="M1209.500 705.800c-1.800-0.900-3.200 0.200-3.700 2.400l-1.900 8.600c-0.400 1.800-1.300 2.500-2.700 2"/><path d="M1203.500 709.700h4.300"/><path d="M1208.300 710.800c1.100-0.400 1.700 0.400 2.200 1.700l1.300 3.200c0.500 1.200 1.100 1.500 2 1.100"/><path d="M1214 710.300l-6.200 6.700"/></g>
    <path d="M1215.500 715h4l-2 2.500zM1269.500 715h4l-2 2.500z" fill="#dcdcdc"/>
    <rect x="1229" y="705.500" width="13" height="10.500" fill="#dcdcdc"/><circle cx="1235.500" cy="710.800" r="2.500" fill="#4a4a4a"/>
    <circle cx="1262" cy="711" r="4.600" fill="none" stroke="#dcdcdc" stroke-width="1.400"/><path d="M1258.700 714.300a4.600 4.600 0 0 0 6.600-6.600z" fill="#dcdcdc"/>
    <path d="M1283 707h5l1.200 1.500h6.500v7.500h-12.700z" fill="#dcdcdc"/><path d="M1283 706h5.200l1 1.200" stroke="#dcdcdc" fill="none"/>
    <path d="M1311 705.500h10v10.500h-5.500l-4.500-4.500z" fill="#dcdcdc"/><path d="M1311 711.500h4.500v4.500" fill="#4a4a4a" stroke="#dcdcdc" stroke-width="0.900"/>
    <path d="M1337 707.500h11M1340.300 707v-1.800h4.400v1.800" stroke="#dcdcdc" stroke-width="1.300" fill="none"/><path d="M1338 709h9l-0.700 8h-7.600z" fill="#dcdcdc"/><path d="M1340.700 710.500v5.500M1342.500 710.500v5.500M1344.300 710.500v5.500" stroke="#4a4a4a" stroke-width="0.800"/>
    <g stroke="#2f2f2f"><path d="M1247.500 722v4M1249.500 722v4M1251.500 722v4M1253.500 722v4M1255.500 722v4M1257.500 722v4M1259.500 722v4M1261.500 722v4M1263.500 722v4M1265.500 722v4"/></g>
  </svg>
</div>
<!-- STATUS BAR -->
<div id="statusbar" class="abs">
  <div class="abs" style="left:0;top:2px;width:255px;height:16px;background:#535353;border-top:1px solid #5e5e5e"></div>
  <div class="t" style="left:15px;top:5px;font-size:10.500px;color:#ececec;letter-spacing:-0.200px;transform:scaleX(0.9307);transform-origin:left center">50%</div>
  <div class="abs" style="left:49px;top:4px;width:22px;height:14px;background:#6a6a6a;border:1px solid #444"></div>
  <svg class="abs" style="left:51px;top:6px" width="18" height="10" viewBox="0 0 18 10"><circle cx="4.500" cy="5" r="3.500" fill="#3e3e3e"/><circle cx="4.500" cy="5" r="1.500" fill="#6a6a6a"/><path d="M10 3h5l-1.500-2M16 7h-5l1.500 2" stroke="#3e3e3e" stroke-width="1.400" fill="none"/></svg>
  <div class="t" style="left:104px;top:5px;font-size:10.500px;color:#ececec;letter-spacing:0.000px;transform:scaleX(0.9836);transform-origin:left center">Missing: 0 / Changed: 0</div>
  <svg class="abs" style="left:247px;top:5px" width="8" height="10" viewBox="0 0 8 10"><path d="M1 0.500l6 4.500-6 4.500z" fill="#f0f0f0"/></svg>
</div>
<!-- ANNOTATION -->
<svg id="anno" class="abs" style="left:0;top:0" width="1366" height="727" viewBox="0 0 1366 727" fill="none" stroke="#f08c3c" stroke-linecap="round" stroke-linejoin="round">
  <path d="M395.4 254.3C395.4 256.6 395.2 258.8 394.8 261.2C394.4 263.5 393.9 266.1 393.1 268.6C392.3 271.1 391.3 273.6 390.2 276.1C389.1 278.7 387.7 281.2 386.2 283.7C384.7 286.2 383.0 288.7 381.1 291.1C379.3 293.5 377.2 296.0 375.0 298.3C372.8 300.7 370.5 303.0 367.9 305.2C365.4 307.5 362.8 309.7 359.9 311.8C357.1 313.9 354.2 316.0 351.1 317.9C348.1 319.9 344.8 321.8 341.5 323.6C338.2 325.4 334.8 327.1 331.3 328.7C327.8 330.3 324.2 331.8 320.5 333.2C316.8 334.7 313.0 336.0 309.2 337.2C305.4 338.4 301.6 339.4 297.7 340.4C293.8 341.4 289.8 342.2 285.9 343.0C282.0 343.7 278.0 344.3 274.1 344.8C270.2 345.3 266.2 345.7 262.5 345.9C258.8 346.2 255.4 346.3 251.8 346.3C248.2 346.3 244.8 346.2 241.1 345.9C237.4 345.7 233.4 345.3 229.5 344.8C225.6 344.3 221.6 343.7 217.7 343.0C213.8 342.2 209.8 341.4 205.9 340.4C202.0 339.4 198.2 338.4 194.4 337.2C190.6 336.0 186.8 334.7 183.1 333.2C179.4 331.8 175.8 330.3 172.3 328.7C168.8 327.1 165.4 325.4 162.1 323.6C158.8 321.8 155.5 319.9 152.5 317.9C149.4 316.0 146.5 313.9 143.7 311.8C140.8 309.7 138.2 307.5 135.7 305.2C133.1 303.0 130.8 300.7 128.6 298.3C126.4 296.0 124.3 293.5 122.5 291.1C120.6 288.7 118.9 286.2 117.4 283.7C115.9 281.2 114.5 278.7 113.4 276.1C112.3 273.6 111.3 271.1 110.5 268.6C109.7 266.1 109.2 263.5 108.8 261.2C108.4 258.8 108.2 256.6 108.2 254.3C108.2 252.0 108.4 249.8 108.8 247.4C109.2 245.1 109.7 242.5 110.5 240.0C111.3 237.5 112.3 235.0 113.4 232.5C114.5 229.9 115.9 227.4 117.4 224.9C118.9 222.4 120.6 219.9 122.5 217.5C124.3 215.1 126.4 212.6 128.6 210.3C130.8 207.9 133.1 205.6 135.7 203.4C138.2 201.1 140.8 198.9 143.7 196.8C146.5 194.7 149.4 192.6 152.5 190.7C155.5 188.7 158.8 186.8 162.1 185.0C165.4 183.2 168.8 181.5 172.3 179.9C175.8 178.3 179.4 176.8 183.1 175.4C186.8 173.9 190.6 172.6 194.4 171.4C198.2 170.2 202.0 169.2 205.9 168.2C209.8 167.2 213.8 166.4 217.7 165.6C221.6 164.9 225.6 164.3 229.5 163.8C233.4 163.3 237.4 162.9 241.1 162.7C244.8 162.4 248.2 162.3 251.8 162.3C255.4 162.3 258.8 162.4 262.5 162.7C266.2 162.9 270.2 163.3 274.1 163.8C278.0 164.3 282.0 164.9 285.9 165.6C289.8 166.4 293.8 167.2 297.7 168.2C301.6 169.2 305.4 170.2 309.2 171.4C313.0 172.6 316.8 173.9 320.5 175.4C324.2 176.8 327.8 178.3 331.3 179.9C334.8 181.5 338.2 183.2 341.5 185.0C344.8 186.8 348.1 188.7 351.1 190.7C354.2 192.6 357.1 194.7 359.9 196.8C362.8 198.9 365.4 201.1 367.9 203.4C370.5 205.6 372.8 207.9 375.0 210.3C377.2 212.6 379.3 215.1 381.1 217.5C383.0 219.9 384.7 222.4 386.2 224.9C387.7 227.4 389.1 229.9 390.2 232.5C391.3 235.0 392.3 237.5 393.1 240.0C393.9 242.5 394.4 245.1 394.8 247.4C395.2 249.8 395.4 252.0 395.4 254.3Z" stroke-width="4.400"/>
  <path d="M369 316L1264.500 707" stroke-width="4.200"/>
  <path d="M369 316L380 320.800" stroke-width="5.200"/>
  <path d="M1258 704.200L1265 707.500" stroke-width="5.500"/>
</svg>
</body>
</html>
